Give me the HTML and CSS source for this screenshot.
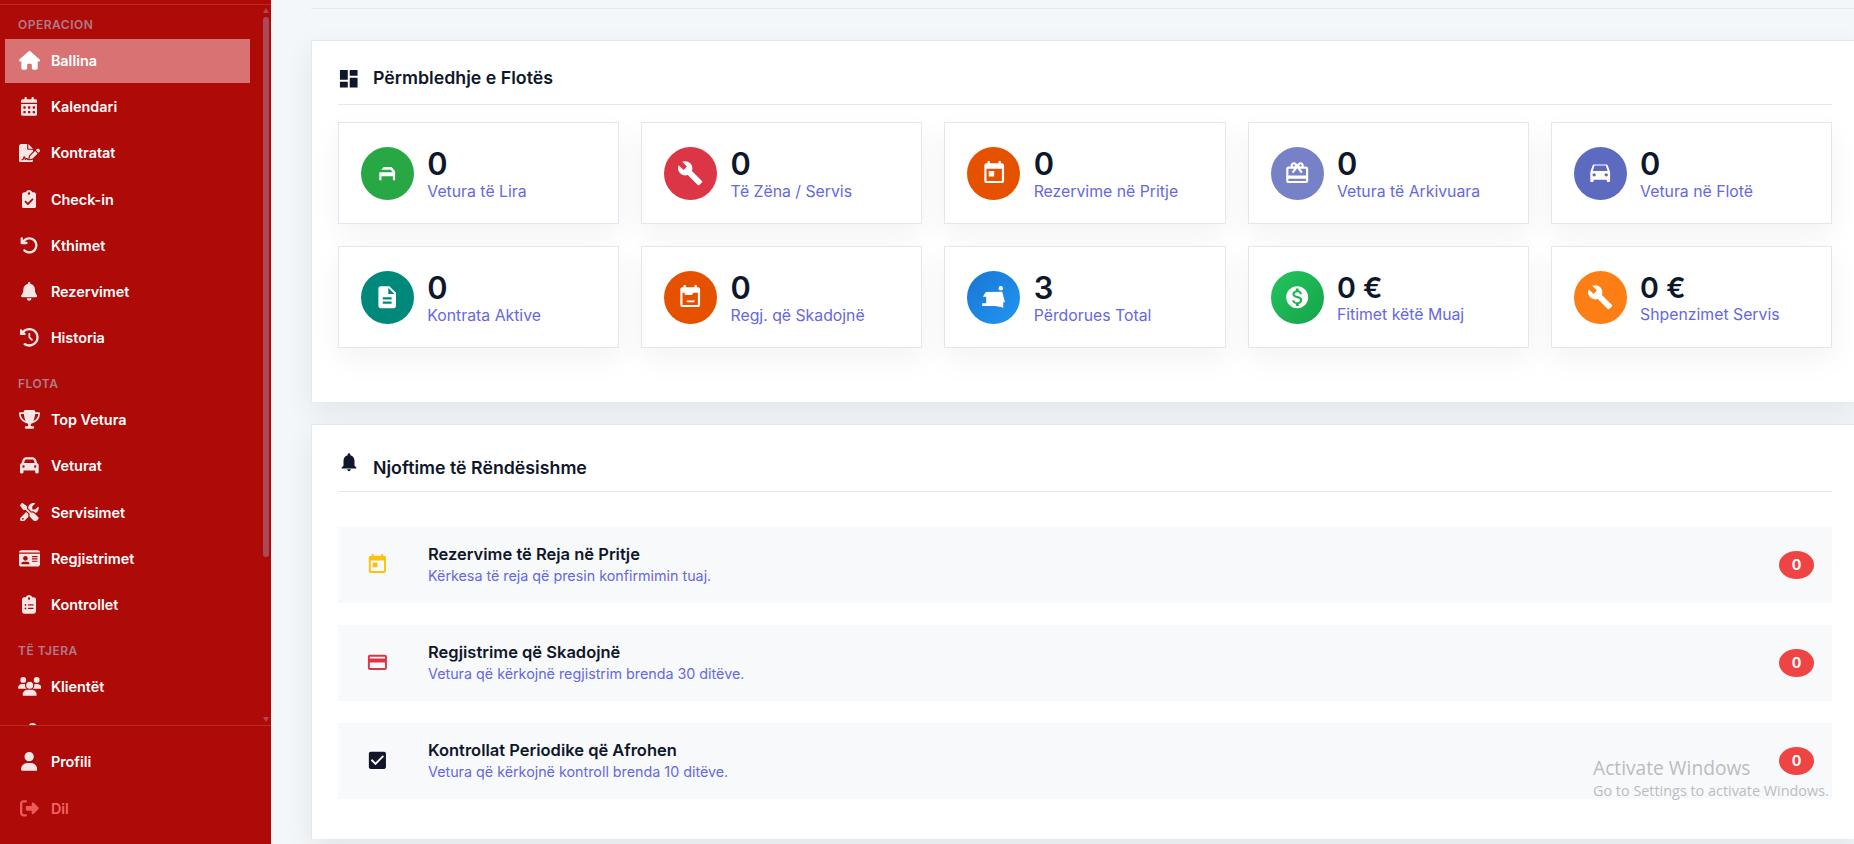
FILE: index.html
```html
<!DOCTYPE html>
<html lang="sq">

<head>
    <meta charset="UTF-8">
    <meta name="viewport" content="width=device-width, initial-scale=1.0">
    <title>Ballina</title>
    <link rel="stylesheet" href="styles.css">
</head>

<body>
    <aside class="sidebar">
        <div class="sidebar-body">
            <nav class="sidebar-nav">
                <div class="nav-label first">Operacion</div>
                <a class="nav-item active" href="#">
                    <span class="nav-icon"><svg viewBox="0 0 576 512"><path d="M575.8 255.5c0 18-15 32.1-32 32.1h-32l.7 160.2c0 2.7-.2 5.4-.5 8.1V472c0 22.1-17.9 40-40 40H456c-1.1 0-2.2 0-3.3-.1c-1.4 .1-2.8 .1-4.2 .1H416 392c-22.1 0-40-17.9-40-40V448 384c0-17.7-14.3-32-32-32H256c-17.7 0-32 14.3-32 32v64 24c0 22.1-17.9 40-40 40H160 128.1c-1.5 0-3-.1-4.5-.2c-1.2 .1-2.4 .2-3.6 .2H104c-22.1 0-40-17.9-40-40V360c0-.9 0-1.9 .1-2.8V287.6H32c-18 0-32-14-32-32.1c0-9 3-17 10-24L266.4 8c7-7 15-8 22-8s15 2 21 7L564.8 231.5c8 7 12 15 11 24z"/></svg></span>
                    <span>Ballina</span>
                </a>
                <a class="nav-item" href="#">
                    <span class="nav-icon"><svg viewBox="0 0 448 512"><path d="M128 0c17.7 0 32 14.3 32 32V64H288V32c0-17.7 14.3-32 32-32s32 14.3 32 32V64h48c26.5 0 48 21.5 48 48v48H0V112C0 85.5 21.5 64 48 64H96V32c0-17.7 14.3-32 32-32zM0 192H448V464c0 26.5-21.5 48-48 48H48c-26.5 0-48-21.5-48-48V192zm64 80v32c0 8.8 7.2 16 16 16h32c8.8 0 16-7.2 16-16V272c0-8.8-7.2-16-16-16H80c-8.8 0-16 7.2-16 16zm128 0v32c0 8.8 7.2 16 16 16h32c8.8 0 16-7.2 16-16V272c0-8.8-7.2-16-16-16H208c-8.8 0-16 7.2-16 16zm144-16c-8.8 0-16 7.2-16 16v32c0 8.8 7.2 16 16 16h32c8.8 0 16-7.2 16-16V272c0-8.8-7.2-16-16-16H336zM64 400v32c0 8.8 7.2 16 16 16h32c8.8 0 16-7.2 16-16V400c0-8.8-7.2-16-16-16H80c-8.8 0-16 7.2-16 16zm144-16c-8.8 0-16 7.2-16 16v32c0 8.8 7.2 16 16 16h32c8.8 0 16-7.2 16-16V400c0-8.8-7.2-16-16-16H208zm112 16v32c0 8.8 7.2 16 16 16h32c8.8 0 16-7.2 16-16V400c0-8.8-7.2-16-16-16H336c-8.8 0-16 7.2-16 16z"/></svg></span>
                    <span>Kalendari</span>
                </a>
                <a class="nav-item" href="#">
                    <span class="nav-icon"><svg viewBox="0 0 576 512"><path d="M64 0C28.7 0 0 28.7 0 64V448c0 35.3 28.7 64 64 64H320c35.3 0 64-28.7 64-64V428.7c-2.7 1.1-5.4 2-8.2 2.7l-60.1 15c-3 .7-6 1.2-9 1.4c-.9 .1-1.8 .2-2.7 .2H240c-6.1 0-11.6-3.4-14.3-8.8l-8.8-17.7c-1.7-3.4-5.1-5.5-8.8-5.5s-7.2 2.1-8.8 5.5l-8.8 17.7c-2.9 5.9-9.2 9.4-15.7 8.8s-12.1-5.1-13.9-11.3L144 381l-9.8 32.8c-6.1 20.3-24.8 34.2-46 34.2H80c-8.8 0-16-7.2-16-16s7.2-16 16-16h8.2c7.1 0 13.3-4.6 15.3-11.4l14.9-49.5c3.4-11.3 13.8-19.1 25.6-19.1s22.2 7.7 25.6 19.1l11.6 38.6c7.4-6.2 16.8-9.7 26.8-9.7c15.9 0 30.4 9 37.5 23.2l4.4 8.8h8.9c-3.1-8.8-3.7-18.4-1.4-27.8l15-60.1c2.8-11.3 8.6-21.5 16.8-29.7L384 203.6V160H256c-17.7 0-32-14.3-32-32V0H64zM256 0V128H384L256 0zM549.8 139.7c-15.6-15.6-40.9-15.6-56.6 0l-29.4 29.4 71 71 29.4-29.4c15.6-15.6 15.6-40.9 0-56.6l-14.4-14.4zM311.9 321c-4.1 4.1-7 9.2-8.4 14.9l-15 60.1c-1.4 5.5 .2 11.2 4.2 15.2s9.7 5.6 15.2 4.2l60.1-15c5.6-1.4 10.8-4.3 14.9-8.4L512.1 262.7l-71-71L311.9 321z"/></svg></span>
                    <span>Kontratat</span>
                </a>
                <a class="nav-item" href="#">
                    <span class="nav-icon"><svg viewBox="0 0 384 512"><path d="M192 0c-41.8 0-77.4 26.7-90.5 64H64C28.7 64 0 92.7 0 128V448c0 35.3 28.7 64 64 64H320c35.3 0 64-28.7 64-64V128c0-35.3-28.7-64-64-64H282.5C269.4 26.7 233.8 0 192 0zm0 64a32 32 0 1 1 0 64 32 32 0 1 1 0-64zM305 273L177 401c-9.4 9.4-24.6 9.4-33.9 0L79 337c-9.4-9.4-9.4-24.6 0-33.9s24.6-9.4 33.9 0l47 47L271 239c9.4-9.4 24.6-9.4 33.9 0s9.4 24.6 0 33.9z"/></svg></span>
                    <span>Check-in</span>
                </a>
                <a class="nav-item" href="#">
                    <span class="nav-icon"><svg viewBox="0 0 512 512"><path d="M125.7 160H176c17.7 0 32 14.3 32 32s-14.3 32-32 32H48c-17.7 0-32-14.3-32-32V64c0-17.7 14.3-32 32-32s32 14.3 32 32v51.2L97.6 97.6c87.5-87.5 229.3-87.5 316.8 0s87.5 229.3 0 316.8s-229.3 87.5-316.8 0c-12.5-12.5-12.5-32.8 0-45.3s32.8-12.5 45.3 0c62.5 62.5 163.8 62.5 226.3 0s62.5-163.8 0-226.3s-163.8-62.5-226.3 0L125.7 160z"/></svg></span>
                    <span>Kthimet</span>
                </a>
                <a class="nav-item" href="#">
                    <span class="nav-icon"><svg viewBox="0 0 448 512"><path d="M224 0c-17.7 0-32 14.3-32 32V51.2C119 66 64 130.6 64 208v18.8c0 47-17.3 92.4-48.5 127.6l-7.4 8.3c-8.4 9.4-10.4 22.9-5.3 34.4S19.4 416 32 416H416c12.6 0 24-7.4 29.2-18.9s3.1-25-5.3-34.4l-7.4-8.3C401.3 319.2 384 273.9 384 226.8V208c0-77.4-55-142-128-156.8V32c0-17.7-14.3-32-32-32zm45.3 493.3c12-12 18.7-28.3 18.7-45.3H224 160c0 17 6.7 33.3 18.7 45.3s28.3 18.7 45.3 18.7s33.3-6.7 45.3-18.7z"/></svg></span>
                    <span>Rezervimet</span>
                </a>
                <a class="nav-item" href="#">
                    <span class="nav-icon"><svg viewBox="0 0 512 512"><path d="M75 75L41 41C25.9 25.9 0 36.6 0 57.9V168c0 13.3 10.7 24 24 24H134.1c21.4 0 32.1-25.9 17-41l-30.8-30.8C155 85.5 203 64 256 64c106 0 192 86 192 192s-86 192-192 192c-40.8 0-78.6-12.7-109.7-34.4c-14.5-10.1-34.4-6.6-44.6 7.9s-6.6 34.4 7.9 44.6C151.2 495 201.7 512 256 512c141.4 0 256-114.6 256-256S397.4 0 256 0C185.3 0 121.3 28.7 75 75zm181 53c-13.3 0-24 10.7-24 24V256c0 6.4 2.5 12.5 7 17l72 72c9.4 9.4 24.6 9.4 33.9 0s9.4-24.6 0-33.9l-65-65V152c0-13.3-10.7-24-24-24z"/></svg></span>
                    <span>Historia</span>
                </a>

                <div class="nav-label">Flota</div>
                <a class="nav-item" href="#">
                    <span class="nav-icon"><svg viewBox="0 0 576 512"><path d="M400 0H176c-26.5 0-48.1 21.8-47.1 48.2c.2 5.3 .4 10.6 .7 15.8H24C10.7 64 0 74.7 0 88c0 92.6 33.5 157 78.5 200.7c44.3 43.1 98.3 64.8 138.1 75.8c23.4 6.5 39.4 26 39.4 45.6c0 20.9-17 37.9-37.9 37.9H192c-17.7 0-32 14.3-32 32s14.3 32 32 32H384c17.7 0 32-14.3 32-32s-14.3-32-32-32H357.9C337 448 320 431 320 410.1c0-19.6 15.9-39.2 39.4-45.6c39.9-11 93.9-32.7 138.2-75.8C542.5 245 576 180.6 576 88c0-13.3-10.7-24-24-24H446.4c.3-5.2 .5-10.4 .7-15.8C448.1 21.8 426.5 0 400 0zM48.9 112h84.4c9.1 90.1 29.2 150.3 51.9 190.6c-24.9-11-50.8-26.5-73.2-48.3c-32-31.1-58-76-63-142.3zM464.1 254.3c-22.4 21.8-48.3 37.3-73.2 48.3c22.7-40.3 42.8-100.5 51.9-190.6h84.4c-5.1 66.3-31.1 111.2-63 142.3z"/></svg></span>
                    <span>Top Vetura</span>
                </a>
                <a class="nav-item" href="#">
                    <span class="nav-icon"><svg viewBox="0 0 512 512"><path d="M135.2 117.4L109.1 192H402.9l-26.1-74.6C372.3 104.6 360.2 96 346.6 96H165.4c-13.6 0-25.7 8.6-30.2 21.4zM39.6 196.8L74.8 96.3C88.3 57.8 124.6 32 165.4 32H346.6c40.8 0 77.1 25.8 90.6 64.3l35.2 100.5c23.2 9.6 39.6 32.5 39.6 59.2V400v48c0 17.7-14.3 32-32 32H448c-17.7 0-32-14.3-32-32V400H96v48c0 17.7-14.3 32-32 32H32c-17.7 0-32-14.3-32-32V400 256c0-26.7 16.4-49.6 39.6-59.2zM128 288a32 32 0 1 0 -64 0 32 32 0 1 0 64 0zm288 32a32 32 0 1 0 0-64 32 32 0 1 0 0 64z"/></svg></span>
                    <span>Veturat</span>
                </a>
                <a class="nav-item" href="#">
                    <span class="nav-icon"><svg viewBox="0 0 512 512"><path d="M78.6 5C69.1-2.4 55.6-1.5 47 7L7 47c-8.5 8.5-9.4 22-2.1 31.6l80 104c4.5 5.9 11.6 9.4 19 9.4h54.1l109 109c-14.7 29-10 65.4 14.3 89.6l112 112c12.5 12.5 32.8 12.5 45.3 0l64-64c12.5-12.5 12.5-32.8 0-45.3l-112-112c-24.2-24.2-60.6-29-89.6-14.3l-109-109V104c0-7.5-3.5-14.5-9.4-19L78.6 5zM19.9 396.1C7.2 408.8 0 426.1 0 444.1C0 481.6 30.4 512 67.9 512c18 0 35.3-7.2 48-19.9L233.7 374.3c-7.8-20.9-9-43.6-3.6-65.1l-61.7-61.7L19.9 396.1zM512 144c0-10.5-1.1-20.7-3.2-30.5c-2.4-11.2-16.1-14.1-24.2-6l-63.9 63.9c-3 3-7.1 4.7-11.3 4.7H352c-8.8 0-16-7.2-16-16V102.6c0-4.2 1.7-8.3 4.7-11.3l63.9-63.9c8.1-8.1 5.2-21.8-6-24.2C388.7 1.1 378.5 0 368 0C288.5 0 224 64.5 224 144l0 .8 85.3 85.3c36-9.1 75.8 .5 104 28.7L429 274.5c49-23 83-72.8 83-130.5zM56 432a24 24 0 1 1 48 0 24 24 0 1 1 -48 0z"/></svg></span>
                    <span>Servisimet</span>
                </a>
                <a class="nav-item" href="#">
                    <span class="nav-icon"><svg viewBox="0 0 576 512"><path d="M0 96l576 0c0-35.3-28.7-64-64-64H64C28.7 32 0 60.7 0 96zm0 32V416c0 35.3 28.7 64 64 64H512c35.3 0 64-28.7 64-64V128H0zM64 405.3c0-29.5 23.9-53.3 53.3-53.3H234.7c29.5 0 53.3 23.9 53.3 53.3c0 5.9-4.8 10.7-10.7 10.7H74.7c-5.9 0-10.7-4.8-10.7-10.7zM176 192a64 64 0 1 1 0 128 64 64 0 1 1 0-128zm176 16c0-8.8 7.2-16 16-16H496c8.8 0 16 7.2 16 16s-7.2 16-16 16H368c-8.8 0-16-7.2-16-16zm0 64c0-8.8 7.2-16 16-16H496c8.8 0 16 7.2 16 16s-7.2 16-16 16H368c-8.8 0-16-7.2-16-16zm0 64c0-8.8 7.2-16 16-16H496c8.8 0 16 7.2 16 16s-7.2 16-16 16H368c-8.8 0-16-7.2-16-16z"/></svg></span>
                    <span>Regjistrimet</span>
                </a>
                <a class="nav-item" href="#">
                    <span class="nav-icon"><svg viewBox="0 0 384 512"><path d="M192 0c-41.8 0-77.4 26.7-90.5 64H64C28.7 64 0 92.7 0 128V448c0 35.3 28.7 64 64 64H320c35.3 0 64-28.7 64-64V128c0-35.3-28.7-64-64-64H282.5C269.4 26.7 233.8 0 192 0zm0 64a32 32 0 1 1 0 64 32 32 0 1 1 0-64zM72 272a24 24 0 1 1 48 0 24 24 0 1 1 -48 0zm104-16H304c8.8 0 16 7.2 16 16s-7.2 16-16 16H176c-8.8 0-16-7.2-16-16s7.2-16 16-16zM72 368a24 24 0 1 1 48 0 24 24 0 1 1 -48 0zm88 0c0-8.8 7.2-16 16-16H304c8.8 0 16 7.2 16 16s-7.2 16-16 16H176c-8.8 0-16-7.2-16-16z"/></svg></span>
                    <span>Kontrollet</span>
                </a>

                <div class="nav-label">Të tjera</div>
                <a class="nav-item" href="#">
                    <span class="nav-icon"><svg viewBox="0 0 640 512"><path d="M144 0a80 80 0 1 1 0 160A80 80 0 1 1 144 0zM512 0a80 80 0 1 1 0 160A80 80 0 1 1 512 0zM0 298.7C0 239.8 47.8 192 106.7 192h42.7c15.9 0 31 3.5 44.6 9.7c-1.3 7.2-1.9 14.7-1.9 22.3c0 38.2 16.8 72.5 43.3 96c-.2 0-.4 0-.7 0H21.3C9.6 320 0 310.4 0 298.7zM405.3 320c-.2 0-.4 0-.7 0c26.6-23.5 43.3-57.8 43.3-96c0-7.6-.7-15-1.9-22.3c13.6-6.3 28.7-9.7 44.6-9.7h42.7C592.2 192 640 239.8 640 298.7c0 11.8-9.6 21.3-21.3 21.3H405.3zM224 224a96 96 0 1 1 192 0 96 96 0 1 1 -192 0zM128 485.3C128 411.7 187.7 352 261.3 352H378.7C452.3 352 512 411.7 512 485.3c0 14.7-11.9 26.7-26.7 26.7H154.7c-14.7 0-26.7-11.9-26.7-26.7z"/></svg></span>
                    <span>Klientët</span>
                </a>
                <a class="nav-item" href="#">
                    <span class="nav-icon"><svg viewBox="0 0 512 512"><circle cx="345" cy="110" r="110"/></svg></span>
                </a>
            </nav>
            <div class="scrollbar">
                <span class="scroll-up"></span>
                <span class="scroll-thumb"></span>
                <span class="scroll-down"></span>
            </div>
        </div>
        <div class="sidebar-footer">
            <a class="nav-item" href="#">
                <span class="nav-icon"><svg viewBox="0 0 448 512"><path d="M224 256A128 128 0 1 0 224 0a128 128 0 1 0 0 256zm-45.7 48C79.8 304 0 383.8 0 482.3C0 498.7 13.3 512 29.7 512H418.3c16.4 0 29.7-13.3 29.7-29.7C448 383.8 368.2 304 269.7 304H178.3z"/></svg></span>
                <span>Profili</span>
            </a>
            <a class="nav-item logout" href="#">
                <span class="nav-icon"><svg viewBox="0 0 512 512"><path d="M377.9 105.9L500.7 228.7c7.2 7.2 11.3 17.1 11.3 27.3s-4.1 20.1-11.3 27.3L377.9 406.1c-6.4 6.4-15 9.9-24 9.9c-18.7 0-33.9-15.2-33.9-33.9l0-62.1-128 0c-17.7 0-32-14.3-32-32l0-64c0-17.7 14.3-32 32-32l128 0 0-62.1c0-18.7 15.2-33.9 33.9-33.9c9 0 17.6 3.6 24 9.9zM160 96L96 96c-17.7 0-32 14.3-32 32l0 256c0 17.7 14.3 32 32 32l64 0c17.7 0 32 14.3 32 32s-14.3 32-32 32l-64 0c-53 0-96-43-96-96L0 128C0 75 43 32 96 32l64 0c17.7 0 32 14.3 32 32s-14.3 32-32 32z"/></svg></span>
                <span>Dil</span>
            </a>
        </div>
    </aside>

    <main class="main">
        <div class="topline"></div>

        <section class="panel">
            <h2 class="panel-title">
                <svg viewBox="0 0 24 24"><path d="M3 13h8V3H3v10zm0 8h8v-6H3v6zm10 0h8V11h-8v10zm0-18v6h8V3h-8z"/></svg>
                <span>Përmbledhje e Flotës</span>
            </h2>
            <div class="stats">
                <div class="stat">
                    <div class="stat-icon green"><svg viewBox="0 0 24 24"><path d="M8.8 6.3H16l3.2 4v8.2h-2v-3.8H6.8v3.8h-2v-7.3h12.1l-1.8-2.3H6.6z"/></svg></div>
                    <div class="stat-text"><div class="stat-value">0</div><div class="stat-label">Vetura të Lira</div></div>
                </div>
                <div class="stat">
                    <div class="stat-icon red"><svg viewBox="0 0 24 24"><path d="M22.7 19l-9.1-9.1c.9-2.3.4-5-1.5-6.9-2-2-5-2.4-7.4-1.3L9 6 6 9 1.6 4.7C.4 7.1.9 10.1 2.9 12.1c1.9 1.9 4.6 2.4 6.9 1.5l9.1 9.1c.4.4 1 .4 1.4 0l2.3-2.3c.5-.4.5-1.1.1-1.4z"/></svg></div>
                    <div class="stat-text"><div class="stat-value">0</div><div class="stat-label">Të Zëna / Servis</div></div>
                </div>
                <div class="stat">
                    <div class="stat-icon orange"><svg viewBox="0 0 24 24"><path d="M19 3h-1V1h-2v2H8V1H6v2H5c-1.11 0-1.99.9-1.99 2L3 19c0 1.1.89 2 2 2h14c1.1 0 2-.9 2-2V5c0-1.1-.9-2-2-2zm0 16H5V8h14v11zM7 10h5v5H7z"/></svg></div>
                    <div class="stat-text"><div class="stat-value">0</div><div class="stat-label">Rezervime në Pritje</div></div>
                </div>
                <div class="stat">
                    <div class="stat-icon lavender"><svg viewBox="0 0 24 24"><path d="M20 6h-2.18c.11-.31.18-.65.18-1 0-1.66-1.34-3-3-3-1.05 0-1.96.54-2.5 1.35l-.5.67-.5-.68C10.96 2.54 10.05 2 9 2 7.34 2 6 3.34 6 5c0 .35.07.69.18 1H4c-1.11 0-1.99.89-1.99 2L2 19c0 1.11.89 2 2 2h16c1.11 0 2-.89 2-2V8c0-1.11-.89-2-2-2zm-5-2c.55 0 1 .45 1 1s-.45 1-1 1-1-.45-1-1 .45-1 1-1zM9 4c.55 0 1 .45 1 1s-.45 1-1 1-1-.45-1-1 .45-1 1-1zm11 15H4v-2h16v2zm0-5H4V8h5.08L7 10.83 8.62 12 11 8.76l1-1.36 1 1.36L15.38 12 17 10.83 14.92 8H20v6z"/></svg></div>
                    <div class="stat-text"><div class="stat-value">0</div><div class="stat-label">Vetura të Arkivuara</div></div>
                </div>
                <div class="stat">
                    <div class="stat-icon indigo"><svg viewBox="0 0 24 24"><path d="M18.92 5.01C18.72 4.42 18.16 4 17.5 4h-11c-.66 0-1.21.42-1.42 1.01L3 11v8c0 .55.45 1 1 1h1c.55 0 1-.45 1-1v-1h12v1c0 .55.45 1 1 1h1c.55 0 1-.45 1-1v-8l-2.08-5.99zM6.85 5h10.29l1.58 5H5.27l1.58-5zM6.5 15c-.83 0-1.5-.67-1.5-1.5S5.67 12 6.5 12s1.5.67 1.5 1.5S7.33 15 6.5 15zm11 0c-.83 0-1.5-.67-1.5-1.5s.67-1.5 1.5-1.5 1.5.67 1.5 1.5-.67 1.5-1.5 1.5z"/></svg></div>
                    <div class="stat-text"><div class="stat-value">0</div><div class="stat-label">Vetura në Flotë</div></div>
                </div>
                <div class="stat">
                    <div class="stat-icon teal"><svg viewBox="0 0 24 24"><path d="M14 2H6c-1.1 0-1.99.9-1.99 2L4 20c0 1.1.89 2 1.99 2H18c1.1 0 2-.9 2-2V8l-6-6zm2 16H8v-2h8v2zm0-4H8v-2h8v2zm-3-5V3.5L18.5 9H13z"/></svg></div>
                    <div class="stat-text"><div class="stat-value">0</div><div class="stat-label">Kontrata Aktive</div></div>
                </div>
                <div class="stat">
                    <div class="stat-icon orange"><svg viewBox="0 0 24 24"><path d="M19 3h-1V1h-2v2H8V1H6v2H5c-1.1 0-2 .9-2 2v14c0 1.1.9 2 2 2h14c1.1 0 2-.9 2-2V5c0-1.1-.9-2-2-2zm0 16H5V8h2v2h6.5l1.5-2H19v11zM8.500 15h8l-1.200 1.700H9.500z"/></svg></div>
                    <div class="stat-text"><div class="stat-value">0</div><div class="stat-label">Regj. që Skadojnë</div></div>
                </div>
                <div class="stat">
                    <div class="stat-icon blue"><svg viewBox="0 0 24 24"><circle cx="18" cy="3.9" r="2"/><path d="M4.4 7.3l14.9-.3 2.5 9.6h-1.600V22l-2-1.200-1.200.4-.6-1-1.600.6-.8-.9H1.100v-2.300h3.600v-5.900h-3z"/></svg></div>
                    <div class="stat-text"><div class="stat-value">3</div><div class="stat-label">Përdorues Total</div></div>
                </div>
                <div class="stat">
                    <div class="stat-icon money"><svg viewBox="0 0 24 24"><path d="M12 2C6.48 2 2 6.48 2 12s4.48 10 10 10 10-4.48 10-10S17.52 2 12 2zm1.41 16.09V20h-2.67v-1.93c-1.71-.36-3.16-1.46-3.27-3.4h1.96c.1 1.05.82 1.87 2.65 1.87 1.96 0 2.4-.98 2.4-1.59 0-.83-.44-1.61-2.67-2.14-2.48-.6-4.18-1.62-4.18-3.67 0-1.72 1.39-2.84 3.11-3.21V4h2.67v1.95c1.86.45 2.79 1.86 2.85 3.39H14.3c-.05-1.11-.64-1.87-2.22-1.87-1.5 0-2.4.68-2.4 1.64 0 .84.65 1.39 2.67 1.91s4.18 1.39 4.18 3.91c-.01 1.83-1.38 2.83-3.12 3.16z"/></svg></div>
                    <div class="stat-text"><div class="stat-value amount">0 €</div><div class="stat-label">Fitimet këtë Muaj</div></div>
                </div>
                <div class="stat">
                    <div class="stat-icon amber"><svg viewBox="0 0 24 24"><path d="M22.7 19l-9.1-9.1c.9-2.3.4-5-1.5-6.9-2-2-5-2.4-7.4-1.3L9 6 6 9 1.6 4.7C.4 7.1.9 10.1 2.9 12.1c1.9 1.9 4.6 2.4 6.9 1.5l9.1 9.1c.4.4 1 .4 1.4 0l2.3-2.3c.5-.4.5-1.1.1-1.4z"/></svg></div>
                    <div class="stat-text"><div class="stat-value amount">0 €</div><div class="stat-label">Shpenzimet Servis</div></div>
                </div>
            </div>
        </section>

        <section class="panel notices">
            <h2 class="panel-title">
                <svg class="bell" viewBox="0 0 24 24"><path d="M12 22c1.1 0 2-.9 2-2h-4c0 1.1.89 2 2 2zm6-6v-5c0-3.07-1.64-5.64-4.5-6.32V4c0-.83-.67-1.5-1.5-1.5s-1.5.67-1.5 1.5v.68C7.63 5.36 6 7.92 6 11v5l-2 2v1h16v-1l-2-2z"/></svg>
                <span>Njoftime të Rëndësishme</span>
            </h2>
            <div class="notice-list">
                <div class="notice">
                    <div class="notice-icon yellow"><svg viewBox="0 0 24 24"><path d="M19 3h-1V1h-2v2H8V1H6v2H5c-1.11 0-1.99.9-1.99 2L3 19c0 1.1.89 2 2 2h14c1.1 0 2-.9 2-2V5c0-1.1-.9-2-2-2zm0 16H5V8h14v11zM7 10h5v5H7z"/></svg></div>
                    <div class="notice-text">
                        <div class="notice-title">Rezervime të Reja në Pritje</div>
                        <div class="notice-sub">Kërkesa të reja që presin konfirmimin tuaj.</div>
                    </div>
                    <span class="badge">0</span>
                </div>
                <div class="notice">
                    <div class="notice-icon crimson"><svg viewBox="0 0 24 24"><path d="M20 4H4c-1.11 0-1.99.89-1.99 2L2 18c0 1.11.89 2 2 2h16c1.11 0 2-.89 2-2V6c0-1.11-.89-2-2-2zm0 14H4v-6h16v6zm0-10H4V6h16v2z"/></svg></div>
                    <div class="notice-text">
                        <div class="notice-title">Regjistrime që Skadojnë</div>
                        <div class="notice-sub">Vetura që kërkojnë regjistrim brenda 30 ditëve.</div>
                    </div>
                    <span class="badge">0</span>
                </div>
                <div class="notice">
                    <div class="notice-icon"><svg viewBox="0 0 24 24"><path d="M19 3H5c-1.11 0-2 .9-2 2v14c0 1.1.89 2 2 2h14c1.11 0 2-.9 2-2V5c0-1.1-.89-2-2-2zm-9 14l-5-5 1.41-1.41L10 14.17l7.59-7.59L19 8l-9 9z"/></svg></div>
                    <div class="notice-text">
                        <div class="notice-title">Kontrollat Periodike që Afrohen</div>
                        <div class="notice-sub">Vetura që kërkojnë kontroll brenda 10 ditëve.</div>
                    </div>
                    <span class="badge">0</span>
                </div>
            </div>
        </section>
    </main>

    <div class="watermark">
        <div class="watermark-title">Activate Windows</div>
        <div class="watermark-text">Go to Settings to activate Windows.</div>
    </div>
</body>

</html>
```

FILE: styles.css
```css
* {
    box-sizing: border-box;
}

body {
    margin: 0;
    height: 844px;
    display: flex;
    overflow: hidden;
    background: #f3f7fa;
    color: #0f172a;
    font-family: Inter, "Liberation Sans", sans-serif;
}

svg {
    display: block;
    fill: currentColor;
}

/* Sidebar */
.sidebar {
    flex: none;
    width: 271px;
    height: 844px;
    padding-top: 4px;
    display: flex;
    flex-direction: column;
    background: #ad0a08;
}

.sidebar-body {
    height: 721px;
    display: flex;
    border-top: 1px solid #bb2a26;
    overflow: hidden;
}

.sidebar-nav {
    width: 263px;
    padding: 0 13px 0 5px;
    overflow: hidden;
}

.nav-label {
    height: 24px;
    margin: 12px 0 2px;
    padding-left: 13px;
    color: #b07c8a;
    font-size: 12px;
    font-weight: 600;
    line-height: 24px;
    letter-spacing: 0.5px;
    text-transform: uppercase;
}

.nav-label.first {
    margin-top: 8px;
}

.nav-item {
    display: flex;
    align-items: center;
    gap: 10.7px;
    height: 44px;
    margin-bottom: 2.2px;
    padding: 0 0 1px 13.2px;
    color: #fff;
    font-size: 14.4px;
    font-weight: 600;
    text-decoration: none;
}

.nav-item.active {
    background: #d97373;
}

.nav-icon {
    width: 22px;
    display: flex;
    justify-content: center;
    opacity: 0.9;
}

.nav-item.active .nav-icon {
    opacity: 1;
}

.nav-icon svg {
    flex: none;
    height: 18.7px;
}

.scrollbar {
    width: 6px;
    display: flex;
    flex-direction: column;
    align-items: center;
    padding: 3px 0 3px;
}

.scroll-up,
.scroll-down {
    border: 3px solid transparent;
    border-top-width: 0;
    border-bottom: 5px solid #ab4a52;
}

.scroll-down {
    margin-top: auto;
    border-top: 5px solid #ab4a52;
    border-bottom-width: 0;
}

.scroll-thumb {
    width: 6px;
    height: 540px;
    margin-top: 4px;
    border-radius: 3px;
    background: #ab4a56;
}

.sidebar-footer {
    padding: 14px 13px 0 5px;
    border-top: 1px solid #bb2a26;
}

.nav-item.logout {
    margin-top: 3px;
    color: #f26464;
}

/* Main content */
.main {
    flex: none;
    width: 1588px;
    padding: 8px 0 0 40px;
}

.topline {
    height: 1px;
    background: #e2e8f0;
    margin-bottom: 31px;
}

.panel {
    height: 361.5px;
    margin-bottom: 22.5px;
    padding: 0 26px;
    background: #fff;
    border: 1px solid #e2e8f0;
    border-bottom: none;
    box-shadow: 0 11px 28px rgba(0, 0, 0, 0.07);
}

.panel-title {
    height: 64px;
    margin: 0;
    display: flex;
    align-items: center;
    gap: 12.5px;
    padding-top: 9px;
    border-bottom: 1px solid #e2e8f0;
    font-size: 17.75px;
    font-weight: 600;
}

.panel-title svg {
    width: 23.5px;
    height: 23.5px;
    margin: 3px 0 0 -1px;
}

.stats {
    display: grid;
    grid-template-columns: repeat(5, 1fr);
    gap: 22px;
    padding-top: 17px;
}

.stat {
    height: 102px;
    display: flex;
    align-items: center;
    gap: 13.3px;
    padding: 0 22px;
    border: 1px solid #e2e8f0;
    background: #fff;
    box-shadow: 0 11px 28px rgba(0, 0, 0, 0.05);
}

.stat-icon {
    width: 53px;
    height: 53px;
    display: flex;
    align-items: center;
    justify-content: center;
    border-radius: 50%;
    color: #fff;
}

.stat-icon svg {
    width: 26.4px;
    height: 26.4px;
}

.green { background: #28a745; }
.red { background: #dc3545; }
.orange { background: #e65100; }
.lavender { background: #7681c8; }
.indigo { background: #5c6bc0; }
.teal { background: #00897b; }
.blue { background: linear-gradient(135deg, #1976d2, #2196f3); }
.money { background: linear-gradient(135deg, #22c55e, #16a34a); }
.amber { background: #fd7e14; }

.stat-text {
    padding-top: 3px;
}

.stat-value {
    font-size: 30.8px;
    font-weight: 600;
    line-height: 35px;
}

.stat-value.amount {
    font-size: 28.6px;
    line-height: 33px;
}

.stat-label {
    color: #6568e0;
    font-size: 15.8px;
    line-height: 22px;
}

/* Notices */
.notices {
    height: 414.5px;
}

.notices .panel-title {
    height: 66.5px;
    padding-top: 19px;
}

.panel-title .bell {
    width: 22px;
    height: 22px;
    margin: -10px 0.5px 0 0;
}

.notice-list {
    display: flex;
    flex-direction: column;
    gap: 22px;
    padding-top: 35px;
}

.notice {
    height: 76px;
    display: flex;
    align-items: center;
    padding-right: 18px;
    background: #f8f9fb;
}

.notice-icon {
    width: 90px;
    padding-left: 28px;
}

.notice-icon svg {
    width: 22.8px;
    height: 22.8px;
}

.yellow { color: #ffc107; }
.crimson { color: #dc3545; }

.notice-title {
    font-size: 16.5px;
    font-weight: 600;
    line-height: 22px;
}

.notice-sub {
    color: #6568e0;
    font-size: 14.3px;
    line-height: 21px;
}

.badge {
    width: 35px;
    height: 28px;
    margin-left: auto;
    border-radius: 50%;
    background: #ef4444;
    color: #fff;
    font-size: 14.3px;
    font-weight: 700;
    line-height: 28px;
    text-align: center;
}

/* Desktop overlay in the corner of the screen */
.watermark {
    position: absolute;
    left: 1593px;
    top: 755px;
    color: #bbbcbe;
    font-family: "Open Sans", sans-serif;
    white-space: nowrap;
}

.watermark-title {
    font-size: 19.2px;
    line-height: 26px;
}

.watermark-text {
    font-size: 14.4px;
    line-height: 20px;
}
```
